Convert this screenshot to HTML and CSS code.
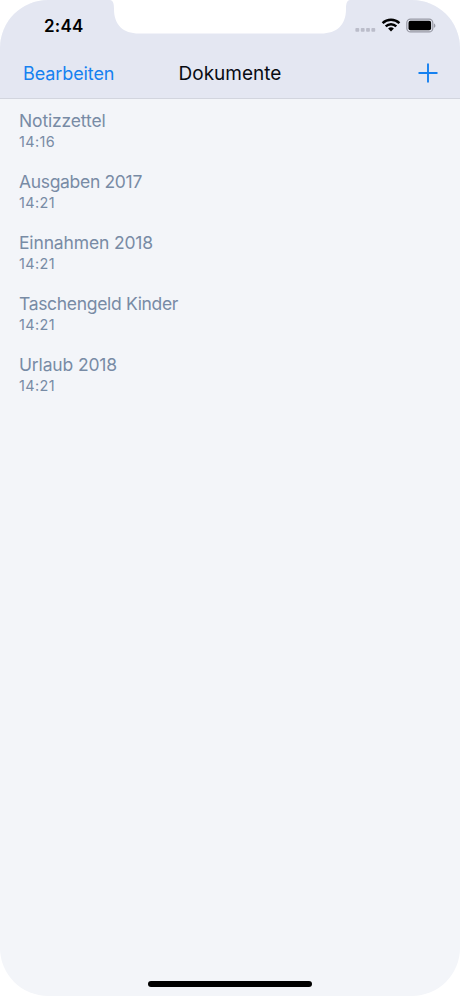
FILE: index.html
```html
<!DOCTYPE html>
<html lang="de">
<head>
<meta charset="utf-8">
<meta name="viewport" content="width=device-width, initial-scale=1">
<title>Dokumente</title>
<link rel="stylesheet" href="styles.css">
</head>
<body>
<div class="phone">
  <header class="header">
    <div class="status">
      <span class="clock">2:44</span>
      <svg class="status-icons" width="82" height="20" viewBox="0 0 82 20" aria-hidden="true">
        <g fill="#bbbdca">
          <rect x="1.4" y="13" width="3.8" height="3.8" rx=".8"/>
          <rect x="6.8" y="13" width="3.8" height="3.8" rx=".8"/>
          <rect x="12.1" y="13" width="3.8" height="3.8" rx=".8"/>
          <rect x="17.4" y="13" width="3.8" height="3.8" rx=".8"/>
        </g>
        <g transform="translate(.5 0)">
          <g fill="none" stroke="#000" stroke-width="2.5">
            <path d="M28.1 8.1a12.2 12.2 0 0 1 16.8 0"/>
            <path d="M31.2 11.4a7.6 7.6 0 0 1 10.6 0"/>
          </g>
          <path d="M33.6 13.6a4.3 4.3 0 0 1 5.8 0L36.5 16.6z" fill="#000"/>
        </g>
        <rect x="52.8" y="4.1" width="26" height="12.8" rx="3.7" fill="none" stroke="#989aa5" stroke-width="1.2"/>
        <rect x="54.5" y="5.8" width="22.6" height="9.4" rx="1.9" fill="#000"/>
        <path d="M79.9 8.4c2 .7 2 3.700 0 4.400z" fill="#989aa5"/>
      </svg>
      <div class="notch">
        <svg width="240" height="34" viewBox="0 0 240 34" aria-hidden="true">
          <path d="M0 0C3 .5 4 3 4 9C4 25 13 33.500 29 33.500H211C227 33.500 236 25 236 9C236 3 237 .5 240 0z" fill="#fff"/>
        </svg>
      </div>
    </div>
    <nav class="navbar">
      <a class="edit">Bearbeiten</a>
      <h1 class="title">Dokumente</h1>
      <svg class="add" width="20" height="20" viewBox="0 0 20 20" role="img" aria-label="Neu">
        <path d="M.5 10H19.500M10 .5V19.500" stroke="#1681f0" stroke-width="1.900"/>
      </svg>
    </nav>
  </header>
  <ul class="documents">
    <li><span class="name">Notizzettel</span><time>14:16</time></li>
    <li><span class="name tight">Ausgaben 2017</span><time>14:21</time></li>
    <li><span class="name">Einnahmen 2018</span><time>14:21</time></li>
    <li><span class="name tight">Taschengeld Kinder</span><time>14:21</time></li>
    <li><span class="name">Urlaub 2018</span><time>14:21</time></li>
  </ul>
  <div class="home"></div>
</div>
</body>
</html>
```
FILE: styles.css
```css
* { box-sizing: border-box; }
body {
  margin: 0;
  background: #fff;
  font-family: Inter, "Liberation Sans", sans-serif;
}
.phone {
  height: 996px;
  display: flex;
  flex-direction: column;
  overflow: hidden;
  border-radius: 48px;
  background: #f3f5f9;
}
.header {
  height: 99px;
  background: #e4e7f2;
  border-bottom: 1px solid #d2d5de;
}
.status {
  position: relative;
  display: flex;
  justify-content: space-between;
  height: 49px;
  padding: 15px 24px 0 44px;
}
.clock {
  font-size: 17px;
  font-weight: 600;
  line-height: 22px;
  letter-spacing: .2px;
}
.notch {
  position: absolute;
  top: 0;
  left: 110px;
  height: 34px;
}
.notch svg { display: block; }
.navbar {
  display: grid;
  grid-template-columns: 1fr auto 1fr;
  align-items: center;
  height: 48px;
  padding: 0 22px;
}
.edit {
  padding: 2px 0 0 1px;
  color: #1681f0;
  font-size: 18px;
  line-height: 24px;
  letter-spacing: -.1px;
}
.title {
  margin: 0;
  padding-top: 2px;
  color: #090b12;
  font-size: 19px;
  line-height: 24px;
  font-weight: 400;
}
.add { justify-self: end; }
.documents {
  flex: 1;
  margin: 0;
  padding: 10px 19px 0;
  list-style: none;
  color: #788ba5;
}
.documents li {
  display: flex;
  flex-direction: column;
  height: 61px;
}
.name {
  font-size: 17.5px;
  line-height: 23px;
  letter-spacing: -.15px;
}
.tight { letter-spacing: -.32px; }
time {
  font-size: 14.4px;
  line-height: 20px;
  letter-spacing: .4px;
}
.home {
  align-self: center;
  width: 164px;
  height: 6px;
  margin-bottom: 9px;
  border-radius: 3px;
  background: #000;
}
```
